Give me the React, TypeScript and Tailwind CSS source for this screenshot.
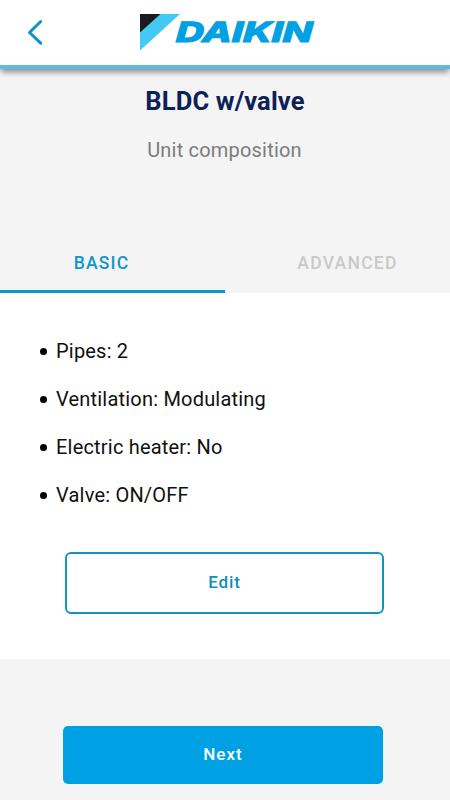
import { useState } from 'react';

type Tab = 'basic' | 'advanced';

const details = [
  { label: 'Pipes', value: '2' },
  { label: 'Ventilation', value: 'Modulating' },
  { label: 'Electric heater', value: 'No' },
  { label: 'Valve', value: 'ON/OFF' },
];

function DaikinLogo() {
  return (
    <svg width="176" height="38" viewBox="0 0 176 38" role="img" aria-label="Daikin">
      <path d="M0 0h40L0 36.5z" fill="#44c8f5" />
      <path d="M0 0h20.5L0 18.5z" fill="#1b1a1c" />
      <text
        x="37"
        y="28.2"
        transform="skewX(-3)"
        textLength="136.5"
        lengthAdjust="spacingAndGlyphs"
        className="fill-[#00a0e4] stroke-[#00a0e4] text-[27.8px] font-extrabold italic [font-family:Inter,sans-serif]"
        strokeWidth="0.9"
      >
        DAIKIN
      </text>
    </svg>
  );
}

function Header() {
  return (
    <header className="relative z-10 flex h-[69px] items-start border-b-4 border-[#5bbcdc] bg-white shadow-[0_4px_6px_-1px_rgba(0,0,0,0.45)]">
      <button aria-label="Back" className="ml-[27px] mt-[19px]">
        <svg width="16" height="27" viewBox="0 0 16 27" fill="none">
          <path d="M13.7 2.5L2.5 13.5l11.2 10.7" stroke="#1093c9" strokeWidth="3" strokeLinecap="round" strokeLinejoin="round" />
        </svg>
      </button>
      <div className="ml-[97px] mt-[14px]">
        <DaikinLogo />
      </div>
    </header>
  );
}

export default function App() {
  const [tab, setTab] = useState<Tab>('basic');

  const tabClass = (name: Tab) =>
    tab === name ? 'border-[#0e97cc] text-[#0e97cc]' : 'border-transparent text-[#c9c9c9]';

  return (
    <div className="flex h-[800px] w-[450px] flex-col overflow-hidden bg-[#f4f4f4] [font-family:Roboto,sans-serif]">
      <Header />

      {/* Title */}
      <div className="h-[162px] pt-[16px] text-center">
        <h1 className="text-[25.5px] font-bold leading-8 tracking-[0.15px] text-[#0b2157]">BLDC w/valve</h1>
        <p className="mt-[17px] pr-px text-[20px] leading-8 tracking-[0.2px] text-[#7c7c7c]">Unit composition</p>
      </div>

      {/* Tabs */}
      <div className="grid h-[62px] grid-cols-2">
        <button
          onClick={() => setTab('basic')}
          className={`border-b-3 pr-[22px] pt-[5px] text-[17.5px] font-medium tracking-[1.2px] ${tabClass('basic')}`}
        >
          BASIC
        </button>
        <button
          onClick={() => setTab('advanced')}
          className={`border-b-3 pl-[20px] pt-[5px] text-[17.5px] font-medium tracking-[1.25px] ${tabClass('advanced')}`}
        >
          ADVANCED
        </button>
      </div>

      {/* Unit details */}
      <main className="h-[366px] bg-white pt-[34px]">
        <ul className="pl-10">
          {details.map(({ label, value }) => (
            <li key={label} className="flex h-12 items-center gap-[9px] text-[20px] tracking-[0.2px] text-[#101010]">
              <span className="size-[7px] rounded-full bg-black" />
              {label}: {value}
            </li>
          ))}
        </ul>
        <button className="ml-[65px] mt-[33px] h-[62px] w-[319px] rounded-md border-2 border-[#0f95c5] text-[17px] font-medium tracking-[0.9px] text-[#118fba]">
          Edit
        </button>
      </main>

      <button className="ml-[63px] mt-[67px] h-[58px] w-80 rounded-[5px] bg-[#00a0e4] text-[17px] font-medium tracking-[1px] text-white">
        Next
      </button>
    </div>
  );
}
